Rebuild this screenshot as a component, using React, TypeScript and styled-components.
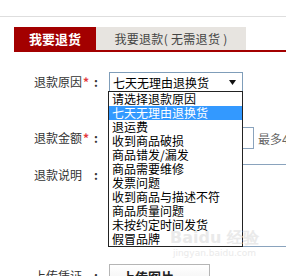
import styled, {createGlobalStyle} from "styled-components";

const GlobalStyle = createGlobalStyle`
  html, body {
    margin: 0;
    padding: 0;
    background: #fff;
  }
  body {
    font-family: "Noto Sans CJK SC", "Noto Sans", sans-serif;
    font-size: 12px;
    color: #333;
  }
`

const Page = styled.div`
  position: relative;
  width: 286px;
  height: 276px;
  overflow: hidden;
`

const TopRule = styled.div`
  margin-top: 16px;
  border-top: 1px solid #dedede;
`

const TabBar = styled.div`
  display: flex;
  margin: 10px 0 0 14px;
  border-bottom: 2px solid #a30000;
`

const Tab = styled.div<{ $active?: boolean }>`
  height: 23px;
  display: flex;
  align-items: center;
  justify-content: center;
  box-sizing: border-box;
  width: ${p => p.$active ? '82px' : '150px'};
  background: ${p => p.$active ? '#a30000' : '#e7e4e0'};
  color: ${p => p.$active ? '#fff' : '#444'};
  font-size: ${p => p.$active ? '13px' : '12px'};
  font-weight: ${p => p.$active ? 700 : 400};
  letter-spacing: ${p => p.$active ? '0' : '0.3px'};
`

const Form = styled.div`
  padding-top: 20px;
`

const Row = styled.div<{ $gap: number; $top?: boolean }>`
  display: flex;
  align-items: ${p => p.$top ? 'flex-start' : 'center'};
  margin-top: ${p => p.$gap}px;
  white-space: nowrap;
`

const Label = styled.div<{ $pad?: number }>`
  display: flex;
  width: 109px;
  flex-shrink: 0;
  padding-left: 34px;
  padding-top: ${p => p.$pad || 0}px;
  box-sizing: border-box;
  line-height: 14px;
  color: #333;
`

const LabelText = styled.span`
  width: 49px;
`

const Star = styled.span`
  width: 10px;
  color: #e4393c;
  font-weight: 700;
`

const Colon = styled.span`
  font-weight: 700;
  padding-left: 1px;
`

const SelectWrap = styled.div`
  position: relative;
  width: 134px;
`

const SelectBox = styled.div`
  height: 20px;
  box-sizing: border-box;
  border: 1px solid #7f9db9;
  display: flex;
  align-items: center;
  padding-left: 3px;
  color: #000;
  background: #fff;
`

const Arrow = styled.svg`
  margin-left: auto;
  margin-right: 6px;
`

const Dropdown = styled.ul`
  position: absolute;
  top: 19px;
  left: -1px;
  width: 135px;
  margin: 0;
  padding: 0;
  list-style: none;
  box-sizing: border-box;
  border: 1px solid #222;
  background: #fff;
  z-index: 2;
`

const Option = styled.li<{ $selected?: boolean }>`
  height: 14px;
  line-height: 14px;
  padding-left: 3px;
  color: ${p => p.$selected ? '#fff' : '#000'};
  background: ${p => p.$selected ? '#3399ff' : 'transparent'};
`

const AmountInput = styled.div`
  width: 145px;
  height: 22px;
  box-sizing: border-box;
  border: 1px solid #8aa3bd;
  flex-shrink: 0;
`

const Hint = styled.span`
  margin-left: 4px;
  color: #666;
`

const TextArea = styled.div`
  width: 400px;
  height: 83px;
  flex-shrink: 0;
  box-sizing: border-box;
  border: 1px solid #8aa3bd;
`

const UploadButton = styled.div`
  width: 101px;
  height: 24px;
  box-sizing: border-box;
  border: 1px solid #b5b5b5;
  background: linear-gradient(#fff, #f0f0f0);
  padding-left: 12px;
  display: flex;
  align-items: center;
  font-weight: 700;
  font-size: 13px;
  color: #222;
  flex-shrink: 0;
`

// faint site watermark laid over the screenshot
const Watermark = styled.div`
  position: absolute;
  left: 170px;
  top: 229px;
  color: #e2e2e2;
  opacity: 0.7;
  text-align: center;
  z-index: 3;
  pointer-events: none;
`

const WatermarkBrand = styled.div`
  font-family: "DejaVu Sans", sans-serif;
  font-size: 16px;
  font-weight: 700;
  line-height: 18px;
`

const WatermarkUrl = styled.div`
  font-family: "DejaVu Sans", sans-serif;
  font-size: 9px;
  line-height: 12px;
`

const reasons = [
    '请选择退款原因',
    '七天无理由退换货',
    '退运费',
    '收到商品破损',
    '商品错发/漏发',
    '商品需要维修',
    '发票问题',
    '收到商品与描述不符',
    '商品质量问题',
    '未按约定时间发货',
    '假冒品牌',
]

const FieldLabel = ({text, required, pad}: { text: string; required?: boolean; pad?: number }) => (
    <Label $pad={pad}>
        <LabelText>{text}</LabelText>
        <Star>{required ? '*' : ''}</Star>
        <Colon>:</Colon>
    </Label>
)

export default function App() {
    return (
        <Page>
            <GlobalStyle/>
            <TopRule/>
            <TabBar>
                <Tab $active>我要退货</Tab>
                <Tab>我要退款( 无需退货 )</Tab>
            </TabBar>
            <Form>
                <Row $gap={0}>
                    <FieldLabel text="退款原因" required/>
                    <SelectWrap>
                        <SelectBox>
                            七天无理由退换货
                            <Arrow width="7" height="5" viewBox="0 0 7 5">
                                <path d="M0 0 H7 L3.5 5 Z" fill="#111"/>
                            </Arrow>
                        </SelectBox>
                        <Dropdown>
                            {reasons.map((r, i) => (
                                <Option key={r} $selected={i === 1}>{r}</Option>
                            ))}
                        </Dropdown>
                    </SelectWrap>
                </Row>
                <Row $gap={35}>
                    <FieldLabel text="退款金额" required/>
                    <AmountInput/>
                    <Hint>最多400.00元</Hint>
                </Row>
                <Row $gap={15} $top>
                    <FieldLabel text="退款说明" pad={4}/>
                    <TextArea/>
                </Row>
                <Row $gap={17}>
                    <FieldLabel text="上传凭证"/>
                    <UploadButton>上传图片</UploadButton>
                </Row>
            </Form>
            <Watermark>
                <WatermarkBrand>Baidu 经验</WatermarkBrand>
                <WatermarkUrl>jingyan.baidu.com</WatermarkUrl>
            </Watermark>
        </Page>
    )
}
